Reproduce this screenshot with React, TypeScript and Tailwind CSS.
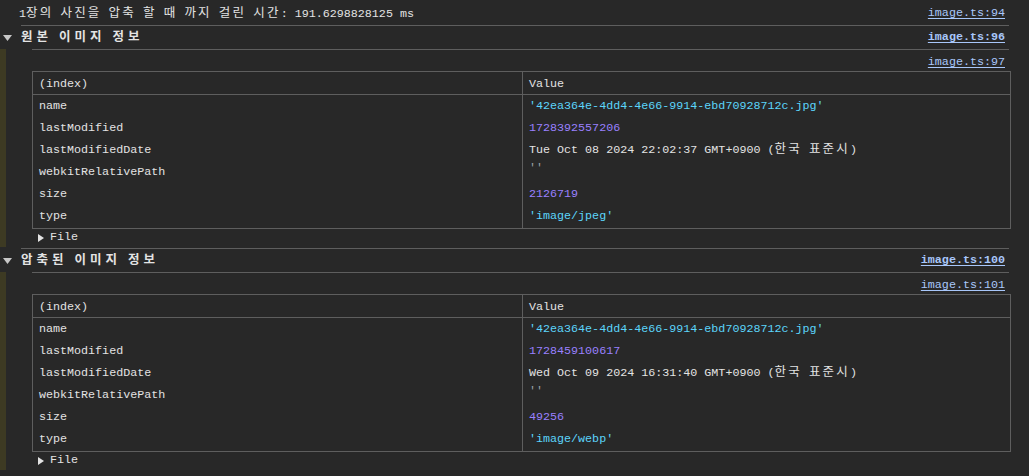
import type { ReactNode } from 'react'

type Cell = { key: string; value: string; kind: 'string' | 'number' | 'plain' | 'empty' }

const original: Cell[] = [
  { key: 'name', value: "'42ea364e-4dd4-4e66-9914-ebd70928712c.jpg'", kind: 'string' },
  { key: 'lastModified', value: '1728392557206', kind: 'number' },
  { key: 'lastModifiedDate', value: 'Tue Oct 08 2024 22:02:37 GMT+0900 (한국 표준시)', kind: 'plain' },
  { key: 'webkitRelativePath', value: "''", kind: 'empty' },
  { key: 'size', value: '2126719', kind: 'number' },
  { key: 'type', value: "'image/jpeg'", kind: 'string' },
]

const compressed: Cell[] = [
  { key: 'name', value: "'42ea364e-4dd4-4e66-9914-ebd70928712c.jpg'", kind: 'string' },
  { key: 'lastModified', value: '1728459100617', kind: 'number' },
  { key: 'lastModifiedDate', value: 'Wed Oct 09 2024 16:31:40 GMT+0900 (한국 표준시)', kind: 'plain' },
  { key: 'webkitRelativePath', value: "''", kind: 'empty' },
  { key: 'size', value: '49256', kind: 'number' },
  { key: 'type', value: "'image/webp'", kind: 'string' },
]

const kindColor: Record<Cell['kind'], string> = {
  string: 'text-[#5cd5fb]',
  number: 'text-[#9980ff]',
  plain: 'text-[#e3e3e3]',
  empty: 'text-[#9aa0a6]',
}

// hangul runs get extra spacing so they sit on the double-width grid
function Mono({ text, bold }: { text: string; bold?: boolean }) {
  const parts = text.split(/([\uac00-\ud7a3]+)/)
  return (
    <span className="whitespace-pre">
      {parts.map((p, i) =>
        /[\uac00-\ud7a3]/.test(p) ? (
          <span key={i} className={bold ? 'text-[12.5px] tracking-[4px]' : 'text-[12.5px] tracking-[2.2px]'}>
            {p}
          </span>
        ) : (
          p
        )
      )}
    </span>
  )
}

function Link({ children, bold }: { children: ReactNode; bold?: boolean }) {
  return (
    <span className={`text-[#a8c7fa] underline underline-offset-2 ${bold ? 'font-bold' : ''}`}>{children}</span>
  )
}

function DownTriangle() {
  return (
    <svg width="9" height="6" viewBox="0 0 9 6" className="ml-[3px]">
      <polygon points="0,0 9,0 4.5,6" fill="#c7c7c7" />
    </svg>
  )
}

function RightTriangle() {
  return (
    <svg width="6" height="8" viewBox="0 0 6 8">
      <polygon points="0,0 6,4 0,8" fill="#e3e3e3" />
    </svg>
  )
}

function Table({ rows }: { rows: Cell[] }) {
  return (
    <div className="mr-[18px] border border-[#5e5e5e]">
      <div className="grid h-[23px] grid-cols-[489px_1fr] border-b border-[#5e5e5e]">
        <div className="flex items-center pl-[6px] pt-[3px]">(index)</div>
        <div className="flex items-center border-l border-[#5e5e5e] pl-[6px] pt-[3px]">Value</div>
      </div>
      <div className="grid grid-cols-[489px_1fr]">
        <div className="py-[0.5px]">
          {rows.map((r) => (
            <div key={r.key} className="flex h-[22px] items-center pl-[6px]">
              {r.key}
            </div>
          ))}
        </div>
        <div className="border-l border-[#5e5e5e] py-[0.5px]">
          {rows.map((r) => (
            <div
              key={r.key}
              className={`flex h-[22px] pl-[6px] ${r.kind === 'empty' ? 'items-start pt-[1px]' : 'items-center'} ${kindColor[r.kind]}`}
            >
              <Mono text={r.value} />
            </div>
          ))}
        </div>
      </div>
    </div>
  )
}

function Group({ title, link, tableLink, rows }: { title: string; link: string; tableLink: string; rows: Cell[] }) {
  return (
    <div>
      <div className="flex h-[23px] items-center pt-[1px]">
        <div className="flex w-[21px] items-center">
          <DownTriangle />
        </div>
        <div className="mr-[24px] flex flex-1 items-center justify-between font-bold">
          <Mono text={title} bold />
          <Link bold>{link}</Link>
        </div>
      </div>
      <div className="border-l-[6px] border-[#3d3a23] pl-[26px]">
        <div className="mr-[20px] flex h-[22px] items-center justify-end border-t border-[#5e5e5e] pr-[4px] pt-[5px]">
          <Link>{tableLink}</Link>
        </div>
        <Table rows={rows} />
        <div className="flex h-[18px] items-center gap-[6px] pl-[6px]">
          <RightTriangle />
          <span>File</span>
        </div>
      </div>
    </div>
  )
}

export default function App() {
  return (
    <div
      className="min-h-screen bg-[#282828] text-[11.7px] leading-none text-[#e3e3e3]"
      style={{ fontFamily: '"Liberation Mono", "Noto Sans CJK KR", monospace' }}
    >
      <div className="ml-[21px] mr-[20px] flex h-[26px] items-center justify-between border-b border-[#5e5e5e] pr-[4px] pt-[3px]">
        <span className="-ml-[2px]">
          <Mono text="1장의 사진을 압축 할 때 까지 걸린 시간: 191.6298828125 ms" />
        </span>
        <Link>image.ts:94</Link>
      </div>
      <Group title="원본 이미지 정보" link="image.ts:96" tableLink="image.ts:97" rows={original} />
      <div className="ml-[21px] mr-[20px] h-[2px] border-b border-[#5e5e5e]" />
      <Group title="압축된 이미지 정보" link="image.ts:100" tableLink="image.ts:101" rows={compressed} />
    </div>
  )
}
